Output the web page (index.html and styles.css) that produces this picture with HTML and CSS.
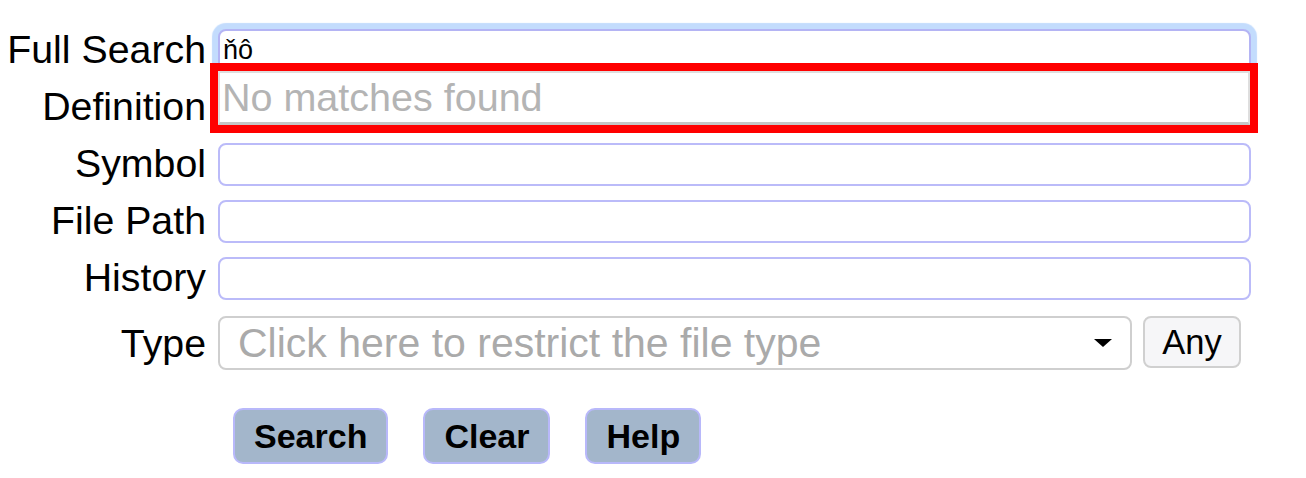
FILE: index.html
```html
<!DOCTYPE html>
<html>
<head>
<meta charset="utf-8">
<link rel="stylesheet" href="styles.css">
</head>
<body>
<form class="search-form">
  <label class="lbl" for="full">Full Search</label>
  <div class="field">
    <div class="input focused" id="full">ňô</div>
    <div class="dropdown">No matches found</div>
  </div>

  <label class="lbl" for="def">Definition</label>
  <div class="field"><div class="input" id="def"></div></div>

  <label class="lbl" for="sym">Symbol</label>
  <div class="field"><div class="input" id="sym"></div></div>

  <label class="lbl" for="path">File Path</label>
  <div class="field"><div class="input" id="path"></div></div>

  <label class="lbl" for="hist">History</label>
  <div class="field"><div class="input" id="hist"></div></div>

  <label class="lbl type-lbl">Type</label>
  <div class="type-row">
    <div class="select">
      <span class="placeholder">Click here to restrict the file type</span>
      <span class="arrow"></span>
    </div>
    <div class="any">Any</div>
  </div>

  <div></div>
  <div class="buttons">
    <div class="btn">Search</div>
    <div class="btn">Clear</div>
    <div class="btn">Help</div>
  </div>
</form>
</body>
</html>
```

FILE: styles.css
```css
html, body {
  margin: 0;
  padding: 0;
  background: #fff;
}
body {
  font-family: "Liberation Sans", Arial, Helvetica, sans-serif;
  color: #000;
}
.search-form {
  display: grid;
  grid-template-columns: 206px 1033px;
  column-gap: 12px;
  row-gap: 14px;
  padding-top: 29px;
  align-items: center;
}
.lbl {
  font-size: 39.3px;
  text-align: right;
  white-space: nowrap;
  line-height: 40px;
  margin-bottom: 3px;
}
.field {
  position: relative;
}
.input {
  box-sizing: border-box;
  height: 43px;
  border: 2px solid #bbbbf9;
  border-radius: 8px;
  background: #fff;
  font-size: 27px;
  line-height: 39px;
  padding-left: 3px;
}
.input.focused {
  box-shadow: 0 0 1px 6px #c3dcfd;
  border-color: #b4b4f4;
}
.dropdown {
  position: absolute;
  top: 42px;
  left: 0;
  right: 1px;
  height: 54px;
  box-sizing: border-box;
  background: #fff;
  border: 2px solid #dedede;
  border-bottom: 3px solid #c6c6c6;
  outline: 8px solid #ff0000;
  color: #b4b4b4;
  font-size: 39.5px;
  line-height: 48px;
  padding-left: 2px;
  z-index: 2;
}
.type-lbl {
  line-height: 54px;
  margin-top: 2px;
  margin-bottom: 0;
}
.type-row {
  display: flex;
  gap: 11px;
  padding-right: 10px;
  margin-top: 2px;
  align-items: flex-start;
}
.select {
  flex: 1;
  box-sizing: border-box;
  height: 54px;
  border: 2px solid #cfcfcf;
  border-radius: 8px;
  background: #fff;
  display: flex;
  align-items: center;
  padding: 0 18px 0 18px;
}
.placeholder {
  flex: 1;
  color: #aaaaaa;
  font-size: 41px;
  white-space: nowrap;
}
.arrow {
  width: 0;
  height: 0;
  border-left: 9px solid transparent;
  border-right: 9px solid transparent;
  border-top: 8px solid #000;
}
.any {
  box-sizing: border-box;
  width: 98px;
  height: 52px;
  border: 2px solid #d0d0d0;
  border-radius: 8px;
  background: #f6f6f8;
  font-size: 34.5px;
  line-height: 48px;
  text-align: center;
}
.buttons {
  display: flex;
  gap: 35px;
  padding-left: 15px;
  margin-top: 24px;
}
.btn {
  box-sizing: border-box;
  height: 56px;
  padding: 0 19px;
  border: 2px solid #b8b8fa;
  border-radius: 10px;
  background: #a3b6cb;
  font-size: 34px;
  font-weight: bold;
  line-height: 52px;
}
```
